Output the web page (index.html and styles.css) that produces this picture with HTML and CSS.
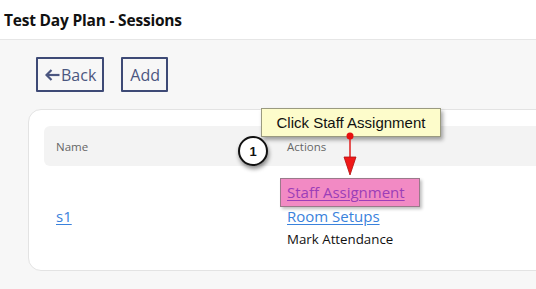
FILE: index.html
```html
<!DOCTYPE html>
<html>
<head>
<meta charset="utf-8">
<link rel="stylesheet" href="styles.css">
</head>
<body>
<header class="topbar"><h1 class="title">Test Day Plan - Sessions</h1></header>
<main class="main">
  <div class="toolbar">
    <button class="btn"><svg class="arrow" width="15" height="12" viewBox="0 0 15 12"><path d="M14.5 6H3" stroke="#4b5680" stroke-width="2.2" fill="none"/><path d="M6.5 1L1.5 6L6.5 11" stroke="#4b5680" stroke-width="2.2" fill="none" stroke-linejoin="miter"/></svg>Back</button>
    <button class="btn">Add</button>
  </div>
  <section class="card">
    <div class="thead">
      <div class="col-name">Name</div>
      <div class="col-actions">Actions</div>
    </div>
    <div class="row">
      <div class="col-name"><a class="link" href="#">s1</a></div>
      <div class="col-actions actions">
        <a class="link visited" href="#">Staff Assignment</a>
        <a class="link" href="#">Room Setups</a>
        <span class="plain">Mark Attendance</span>
      </div>
    </div>
  </section>
</main>
<div class="highlight"></div>
<div class="tooltip">Click Staff Assignment</div>
<svg class="pointer" width="20" height="50" viewBox="0 0 20 50">
  <line x1="10" y1="4" x2="10" y2="26" stroke="#e02020" stroke-width="1.5"/>
  <circle cx="10" cy="4" r="3.5" fill="#e81010"/>
  <polygon points="4,25 16,25 10,43" fill="#f01818" stroke="#b01010" stroke-width="0.8"/>
</svg>
<div class="step">1</div>
</body>
</html>
```
FILE: styles.css
```css
html, body {
  margin: 0;
  padding: 0;
  overflow: hidden;
  background: #f7f7f7;
  font-family: "Open Sans", "Noto Sans", sans-serif;
}
.topbar {
  height: 39px;
  background: #fff;
  border-bottom: 1px solid #e6e6e6;
  display: flex;
  align-items: center;
  padding-left: 4px;
}
.title {
  margin: 0;
  font-size: 15.5px;
  font-weight: 700;
  color: #111;
  letter-spacing: -0.2px;
}
.main {
  padding: 17px 0 0 28px;
}
.toolbar {
  display: flex;
  gap: 17px;
  margin-left: 8px;
}
.btn {
  height: 35px;
  box-sizing: border-box;
  background: transparent;
  border: 2px solid #3e4a76;
  color: #4b5680;
  font-family: "Open Sans", "Noto Sans", sans-serif;
  font-size: 16px;
  padding: 0 6px 0 7px;
  display: flex;
  align-items: center;
  border-radius: 1px;
}
.arrow {
  margin-right: 1px;
  margin-top: 1px;
}
.card {
  margin-top: 17px;
  width: 560px;
  height: 162px;
  box-sizing: border-box;
  background: #fff;
  border: 1px solid #e3e3e3;
  border-radius: 13px;
  padding: 16px 0 0 15px;
}
.thead {
  display: flex;
  height: 40px;
  align-items: center;
  background: #f3f3f3;
  border-radius: 6px;
  font-size: 11.5px;
  color: #666;
}
.col-name {
  width: 243px;
  padding-left: 12px;
  box-sizing: border-box;
}
.row {
  display: flex;
  align-items: center;
  padding-top: 15px;
}
.actions {
  display: flex;
  flex-direction: column;
  align-items: flex-start;
  line-height: 23.5px;
}
.link {
  color: #3a82dc;
  font-size: 15px;
  text-decoration: underline;
  text-underline-offset: 2px;
}
.visited {
  color: #9c3eb8;
  position: relative;
  z-index: 2;
}
.plain {
  font-size: 13.3px;
  color: #111;
}
.highlight {
  position: absolute;
  left: 280px;
  top: 178px;
  width: 140px;
  height: 29px;
  box-sizing: border-box;
  background: #f28ac4;
  border: 1px solid #9a7a8a;
  box-shadow: 2px 2px 3px rgba(0,0,0,0.25);
}
.tooltip {
  position: absolute;
  left: 261px;
  top: 108px;
  width: 180px;
  height: 29px;
  box-sizing: border-box;
  background: #fdfccb;
  border: 1px solid #9a9a80;
  box-shadow: 2px 3px 4px rgba(0,0,0,0.35);
  font-family: "Liberation Sans", Arial, sans-serif;
  font-size: 15px;
  color: #111;
  display: flex;
  align-items: center;
  justify-content: center;
}
.pointer {
  position: absolute;
  left: 340px;
  top: 132px;
}
.step {
  position: absolute;
  left: 238px;
  top: 136px;
  width: 30px;
  height: 30px;
  box-sizing: border-box;
  border: 2px solid #111;
  border-radius: 50%;
  background: #fff;
  box-shadow: 1px 3px 4px rgba(0,0,0,0.45);
  font-family: "Liberation Sans", Arial, sans-serif;
  font-weight: 700;
  font-size: 13px;
  display: flex;
  align-items: center;
  justify-content: center;
  color: #111;
}
```
